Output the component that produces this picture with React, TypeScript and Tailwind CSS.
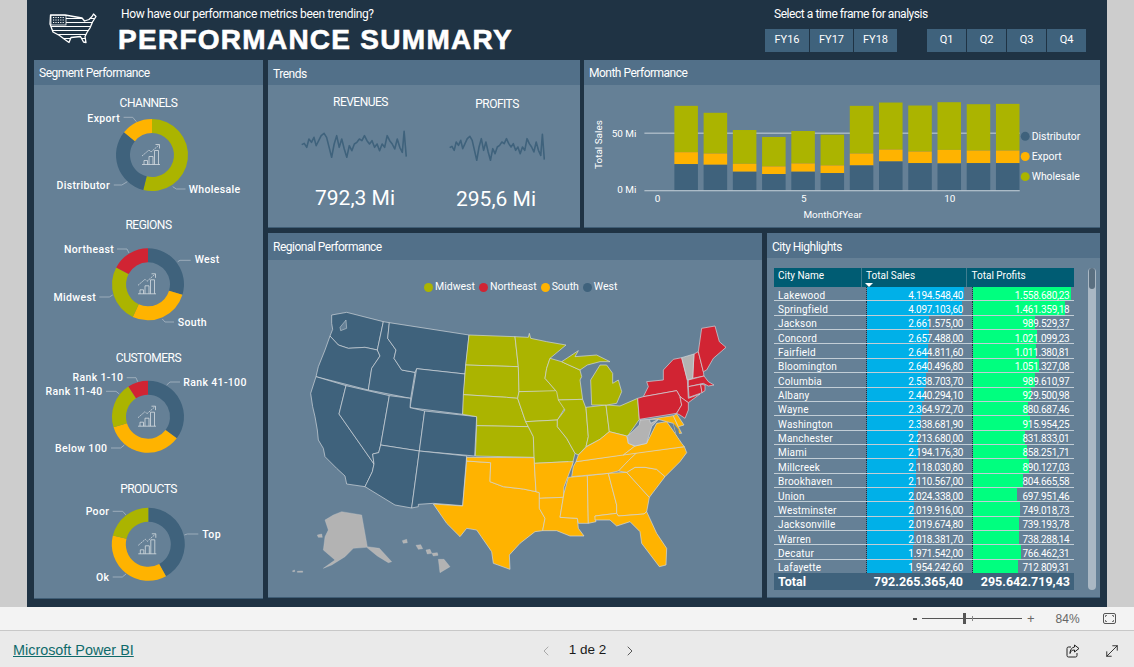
import React from 'react';
import { ChevronLeft, ChevronRight, MoveDiagonal } from 'lucide-react';

const BLUE = '#3f627c';
const GREEN = '#abb400';
const ORANGE = '#ffb300';
const RED = '#d12433';
const GRAY = '#b3b3b3';

type Slice = { color: string; from: number; to: number };
type Label = { text: string; x: number; y: number; anchor?: 'start' | 'end'; line: string };

const arcPath = (cx: number, cy: number, r: number, ir: number, from: number, to: number) => {
  const pt = (rad: number, deg: number) => {
    const a = ((deg - 90) * Math.PI) / 180;
    return `${(cx + rad * Math.cos(a)).toFixed(2)} ${(cy + rad * Math.sin(a)).toFixed(2)}`;
  };
  const large = to - from > 180 ? 1 : 0;
  return `M${pt(r, from)} A${r} ${r} 0 ${large} 1 ${pt(r, to)} L${pt(ir, to)} A${ir} ${ir} 0 ${large} 0 ${pt(ir, from)} Z`;
};

const ChartGlyph: React.FC<{ cx: number; cy: number }> = ({ cx, cy }) => (
  <g transform={`translate(${cx} ${cy})`} fill="none" stroke="#d5dce1" strokeWidth="0.8">
    <path d="M-9 9.5H9" />
    <path d="M-7 9.5V5.5H-3.5V9.5M-2 9.5V1.5H2V9.5M3.5 9.5V-4.5H7.5V9.5" />
    <path d="M-9 1L-2 -5L0 -3L8 -10" strokeDasharray="2 0.8" />
    <path d="M4.5 -10.5H8.5V-6.5" />
  </g>
);

const Donut: React.FC<{
  title: string;
  cx: number;
  cy: number;
  r: number;
  ir: number;
  top: number;
  height: number;
  slices: Slice[];
  labels: Label[];
}> = ({ title, cx, cy, r, ir, top, height, slices, labels }) => (
  <div className="flex flex-col">
    <div className="h-[18px] text-center text-[12px] leading-[18px] tracking-[-0.5px] text-white">{title}</div>
    <svg width="229" height={height} viewBox={`34 ${top} 229 ${height}`} className="block">
      {slices.map((s) => (
        <path key={s.color} d={arcPath(cx, cy, r, ir, s.from, s.to)} fill={s.color} />
      ))}
      <ChartGlyph cx={cx - 1} cy={cy} />
      {labels.map((l) => (
        <g key={l.text}>
          <polyline points={l.line} fill="none" stroke="#a9b8c4" strokeWidth="0.8" />
          <text x={l.x} y={l.y} textAnchor={l.anchor ?? 'start'} className="fill-white text-[10.5px] font-medium tracking-[0.35px]">
            {l.text}
          </text>
        </g>
      ))}
    </svg>
  </div>
);

const Panel: React.FC<{ title: string; className: string; children: React.ReactNode; headerClass?: string }> = ({
  title,
  className,
  children,
  headerClass = 'h-[25px] pt-[1px]',
}) => (
  <section className={`flex flex-col bg-[#658096] border-b border-[#3f5d75] ${className}`}>
    <div className={`flex items-center bg-[#527089] pl-[5px] text-[12px] tracking-[-0.5px] text-white shrink-0 ${headerClass}`}>{title}</div>
    {children}
  </section>
);

// trend line, same shape for revenues and profits
const spark =
  '828,432 835,428 842,440 848,415 855,425 862,410 868,435 875,420 882,405 890,398 897,410 904,440 911,470 918,430 925,405 932,440 939,415 946,445 953,470 960,435 967,450 974,430 981,425 988,415 995,420 1002,405 1009,420 1016,430 1023,420 1030,440 1037,430 1044,450 1051,430 1058,440 1065,405 1072,420 1079,430 1086,445 1093,415 1100,440 1107,455 1112,392 1118,468';

const TrendCol: React.FC<{ title: string; value: string; className: string; titleTop: string; sparkW: string; sparkTop: string; sparkLeft: string; valueLeft: string }> = ({
  title,
  value,
  className,
  titleTop,
  sparkW,
  sparkTop,
  sparkLeft,
  valueLeft,
}) => (
  <div className={`flex flex-col items-center ${className}`}>
    <div className={`text-[12px] leading-[16px] tracking-[-0.5px] text-white ${titleTop}`}>{title}</div>
    <svg viewBox="826 388 294 84" preserveAspectRatio="none" className={`block h-[28px] ${sparkW} ${sparkTop} ${sparkLeft}`}>
      <polyline points={spark} fill="none" stroke={BLUE} strokeWidth="1.6" strokeLinejoin="round" vectorEffect="non-scaling-stroke" />
    </svg>
    <div className={`text-[21px] leading-[28px] text-white ${valueLeft}`}>{value}</div>
  </div>
);

const bars = [
  [318, 458, 494],
  [339, 462, 496],
  [391, 493, 517],
  [412, 501, 524],
  [394, 492, 517],
  [405, 498, 521],
  [318, 462, 498],
  [308, 450, 486],
  [317, 456, 491],
  [307, 451, 492],
  [313, 453, 491],
  [312, 453, 491],
];

const MonthChart: React.FC = () => (
  <svg width="516" height="143" viewBox="584 85 516 143" className="block">
    <line x1="643" x2="1021" y1="133.5" y2="133.5" stroke="#c8d2da" strokeWidth="1" />
    {bars.map((b, i) => {
      const x = 673.2 + i * 29.44;
      const [a, c, d] = b.map((v) => v / 3);
      return (
        <g key={i}>
          <rect x={x} y={a} width="23.7" height={c - a} fill={GREEN} />
          <rect x={x} y={c} width="23.7" height={d - c} fill={ORANGE} />
          <rect x={x} y={d} width="23.7" height={191 - d} fill={BLUE} />
        </g>
      );
    })}
    <line x1="643" x2="1021" y1="191.5" y2="191.5" stroke="#c8d2da" strokeWidth="1" />
    <g className="fill-white text-[10px]">
      <text x="635" y="137" textAnchor="end">50 Mi</text>
      <text x="635" y="194" textAnchor="end">0 Mi</text>
      <text x="656.3" y="203" textAnchor="middle">0</text>
      <text x="803.5" y="203" textAnchor="middle">5</text>
      <text x="950.6" y="203" textAnchor="middle">10</text>
      <text x="832.6" y="219" textAnchor="middle">MonthOfYear</text>
      <text transform="translate(600 145) rotate(-90)" textAnchor="middle">Total Sales</text>
      <text x="1033" y="140.5" className="text-[10.5px]">Distributor</text>
      <text x="1033" y="160.5" className="text-[10.5px]">Export</text>
      <text x="1033" y="181" className="text-[10.5px]">Wholesale</text>
    </g>
    <circle cx="1026.5" cy="136.7" r="4.5" fill={BLUE} />
    <circle cx="1026.5" cy="157" r="4.5" fill={ORANGE} />
    <circle cx="1026.5" cy="177.3" r="4.5" fill={GREEN} />
  </svg>
);

const states: { color: string; pts: string }[] = [
  // west
  { color: BLUE, pts: '125,135 170,127 280,155 262,240 225,232 175,235 145,225 120,198 128,178 125,160' },
  { color: BLUE, pts: '120,198 145,225 175,235 225,232 262,240 270,258 245,295 235,360 78,320 85,290 105,240' },
  { color: BLUE, pts: '78,320 168,347 147,432 252,582 247,605 230,640 225,650 170,642 165,618 140,595 105,560 100,535 85,510 82,480 75,440 68,410 62,370' },
  { color: BLUE, pts: '168,347 298,377 272,525 266,548 248,552 252,582 147,432' },
  { color: BLUE, pts: '280,155 298,158 293,205 318,240 312,265 335,300 375,307 362,385 235,360 245,295 270,258 262,240' },
  { color: BLUE, pts: '298,158 537,195 525,312 380,296 375,307 335,300 312,265 318,240 293,205' },
  { color: BLUE, pts: '380,296 525,312 518,433 360,413' },
  { color: BLUE, pts: '298,377 362,385 360,413 404,423 388,543 272,525' },
  { color: BLUE, pts: '404,423 560,440 554,558 388,543' },
  { color: BLUE, pts: '272,525 388,543 365,714 315,705 225,650 230,640 247,605 252,582 248,552 266,548' },
  { color: BLUE, pts: '388,543 530,558 518,707 430,700 385,703 385,710 365,714' },
  // midwest
  { color: GREEN, pts: '537,195 675,200 685,290 527,285' },
  { color: GREEN, pts: '527,285 685,290 687,365 683,385 650,382 520,374' },
  { color: GREEN, pts: '520,374 650,382 683,385 695,420 707,455 715,470 560,467 560,440 518,433' },
  { color: GREEN, pts: '560,467 715,470 730,500 733,562 556,558' },
  { color: GREEN, pts: '675,200 715,202 718,190 722,205 770,215 828,225 780,265 770,295 765,325 800,365 687,365 685,290' },
  { color: GREEN, pts: '687,365 800,362 830,405 802,450 707,455 695,420 683,385' },
  { color: GREEN, pts: '707,455 802,450 802,470 830,505 855,550 845,590 835,575 733,580 730,500 715,470' },
  { color: GREEN, pts: '780,265 815,275 870,300 875,320 870,330 878,388 805,390 800,365 765,325 770,295' },
  { color: GREEN, pts: '805,390 878,388 888,415 895,500 888,530 865,555 855,550 830,505 802,470 802,450 825,420' },
  { color: GREEN, pts: '888,412 948,405 958,485 930,508 888,530 895,500' },
  { color: GREEN, pts: '948,405 990,408 1043,385 1048,448 1015,495 1010,498 958,485' },
  { color: GREEN, pts: '905,405 902,330 930,285 950,285 968,310 968,340 985,330 995,365 980,400 950,405' },
  { color: GREEN, pts: '815,275 865,242 855,260 920,255 960,275 930,275 892,285 870,300 825,280' },
  // northeast
  { color: RED, pts: '1060,380 1075,350 1070,335 1120,330 1120,300 1150,268 1175,263 1192,330 1195,385 1230,372 1195,398 1170,380 1160,362' },
  { color: RED, pts: '1043,385 1060,380 1160,362 1170,380 1175,405 1160,430 1048,448' },
  { color: RED, pts: '1170,380 1195,398 1195,420 1185,445 1170,435 1160,430 1175,405' },
  { color: RED, pts: '1212,252 1225,245 1240,305 1242,318 1208,325' },
  { color: RED, pts: '1225,245 1235,175 1275,168 1288,215 1308,232 1270,265 1250,300 1240,305' },
  { color: RED, pts: '1195,330 1242,318 1255,335 1272,345 1255,348 1240,340 1195,350' },
  { color: RED, pts: '1195,350 1232,343 1236,368 1197,382' },
  { color: RED, pts: '1232,343 1245,345 1245,362 1236,368' },
  // south
  { color: ORANGE, pts: '530,573 602,578 600,635 640,650 700,657 738,665 748,668 748,715 765,745 758,782 735,785 690,820 658,855 660,898 610,880 605,845 560,780 530,775 510,800 470,760 430,702 518,708' },
  { color: ORANGE, pts: '530,562 732,563 738,665 700,657 640,650 600,635 602,578 530,573' },
  { color: ORANGE, pts: '733,580 835,575 850,575 845,590 822,650 820,682 748,685 748,668 738,665' },
  { color: ORANGE, pts: '748,685 820,682 810,742 862,745 865,775 882,798 840,798 800,782 758,782 765,745 748,715' },
  { color: ORANGE, pts: '835,622 892,617 895,760 865,760 862,745 810,742 822,670' },
  { color: ORANGE, pts: '892,617 955,610 980,705 980,730 915,738 918,755 895,760' },
  { color: ORANGE, pts: '955,610 1010,607 1078,682 1070,725 1062,732 985,738 980,730 980,705' },
  { color: ORANGE, pts: '915,738 980,730 985,738 1062,732 1070,725 1100,790 1130,835 1128,885 1108,890 1055,820 1050,785 1020,755 980,768 960,750 915,750' },
  { color: ORANGE, pts: '1010,607 1035,592 1065,592 1100,598 1125,620 1078,682' },
  { color: ORANGE, pts: '985,603 1015,572 1040,548 1183,530 1190,548 1170,575 1160,585 1125,620 1100,598 1065,592 1035,592 1010,607' },
  { color: ORANGE, pts: '858,575 1040,548 1015,572 985,603 955,610 845,620 850,590' },
  { color: ORANGE, pts: '858,575 865,555 890,530 930,508 958,485 1010,498 1015,520 1035,528 1000,555' },
  { color: ORANGE, pts: '1000,555 1035,528 1070,520 1100,460 1130,455 1155,490 1175,520 1183,530' },
  { color: ORANGE, pts: '1078,448 1150,437 1165,470 1175,490 1158,490 1150,460 1130,455 1105,448' },
  { color: ORANGE, pts: '1150,437 1160,432 1182,465 1165,470' },
  // no data
  { color: GRAY, pts: '1175,263 1212,252 1208,325 1192,330' },
  { color: GRAY, pts: '1012,500 1048,465 1050,450 1078,448 1082,460 1105,448 1085,470 1070,520 1035,528 1015,520' },
];

const specks = [
  '130,735 155,725 215,735 232,830 268,835 305,875 295,878 262,858 230,832 190,835 165,860 125,885 100,895 135,870 100,840 105,800 115,780 105,750',
  '445,868 462,868 480,890 450,908',
  '337,812 350,808 352,818 340,820',
  '378,826 392,824 398,836 385,838',
  '408,840 420,838 425,850 412,852',
  '426,850 442,848 444,856 430,858',
  '82,795 95,792 97,802 85,802',
  '8,902 14,900 14,905 8,905',
  '22,904 38,903 38,907 22,907',
];

const UsMap: React.FC = () => (
  <svg width="450" height="296" viewBox="0 72 1350 888" className="block ml-[22px]">
    {states.map((s, i) => (
      <polygon key={i} points={s.pts} fill={s.color} stroke="#d4dade" strokeWidth="2" strokeLinejoin="round" />
    ))}
    {specks.map((p) => (
      <polygon key={p} points={p} fill={GRAY} stroke="#c4c9cc" strokeWidth="1" />
    ))}
    <polygon points="1150,460 1158,490 1170,510 1165,478" fill="#658096" />
    <polygon points="150,172 168,150 170,175 152,182" fill="#658096" stroke="#d4dade" strokeWidth="1.5" />
  </svg>
);

const cities: [string, number, string, number, string][] = [
  ['Lakewood', 4194548, '4.194.548,40', 1558680, '1.558.680,23'],
  ['Springfield', 4097103, '4.097.103,60', 1461359, '1.461.359,18'],
  ['Jackson', 2661575, '2.661.575,00', 989529, '989.529,37'],
  ['Concord', 2657488, '2.657.488,00', 1021099, '1.021.099,23'],
  ['Fairfield', 2644811, '2.644.811,60', 1011380, '1.011.380,81'],
  ['Bloomington', 2640496, '2.640.496,80', 1051327, '1.051.327,08'],
  ['Columbia', 2538703, '2.538.703,70', 989610, '989.610,97'],
  ['Albany', 2440294, '2.440.294,10', 929500, '929.500,98'],
  ['Wayne', 2364972, '2.364.972,70', 880687, '880.687,46'],
  ['Washington', 2338681, '2.338.681,90', 915954, '915.954,25'],
  ['Manchester', 2213680, '2.213.680,00', 831833, '831.833,01'],
  ['Miami', 2194176, '2.194.176,30', 858251, '858.251,71'],
  ['Millcreek', 2118030, '2.118.030,80', 890127, '890.127,03'],
  ['Brookhaven', 2110567, '2.110.567,00', 804665, '804.665,58'],
  ['Union', 2024338, '2.024.338,00', 697951, '697.951,46'],
  ['Westminster', 2019916, '2.019.916,00', 749018, '749.018,73'],
  ['Jacksonville', 2019674, '2.019.674,80', 739193, '739.193,78'],
  ['Warren', 2018381, '2.018.381,70', 738288, '738.288,14'],
  ['Decatur', 1971542, '1.971.542,00', 766462, '766.462,31'],
  ['Lafayette', 1954242, '1.954.242,60', 712809, '712.809,31'],
];

const CityTable: React.FC = () => (
  <div className="flex pl-[7px] pt-[10px]">
    <div className="flex w-[300px] flex-col">
      <div className="relative flex h-[19px] bg-[#005c73] text-[10px] leading-[15px] text-white">
        <div className="w-[87.5px] border-r border-[#3f7d90] pl-[4px]">City Name</div>
        <div className="w-[105.5px] border-r border-[#3f7d90] pl-[4.5px]">Total Sales</div>
        <div className="pl-[4.5px]">Total Profits</div>
        <div className="absolute left-[91px] top-[15px] h-0 w-0 border-x-[4px] border-t-[4px] border-x-transparent border-t-white" />
      </div>
      <div className="h-[286px] overflow-hidden">
        {cities.map(([name, sales, salesText, profit, profitText]) => (
          <div key={name} className="flex h-[14.37px] border-b border-[#c3ced6] text-[10px] leading-[14px] text-white">
            <div className="w-[92.3px] pl-[4px] pt-[1.5px] tracking-[0.2px]">{name}</div>
            <div className="relative w-[105.4px] border-l border-dotted border-[#1f3344]">
              <div className="absolute inset-y-0 left-0 bg-[#00b0e8]" style={{ width: (sales / 4194548) * 96.7 }} />
              <div className="absolute right-[8.5px] top-[1.5px] tracking-[-0.25px]">{salesText}</div>
            </div>
            <div className="relative flex-1 border-l border-dotted border-[#1f3344]">
              <div className="absolute inset-y-0 left-0 bg-[#00ff7f]" style={{ width: (profit / 1558680) * 98.3 }} />
              <div className="absolute right-[4.5px] top-[1.5px] tracking-[-0.25px]">{profitText}</div>
            </div>
          </div>
        ))}
      </div>
      <div className="flex h-[17px] items-center bg-[#3f627c] pt-[2px] text-[12.5px] font-bold text-white">
        <div className="w-[88px] pl-[4px]">Total</div>
        <div className="w-[101px] text-right">792.265.365,40</div>
        <div className="flex-1 pr-[4px] text-right">295.642.719,43</div>
      </div>
    </div>
    <div className="ml-[14px] h-[322px] w-[8px] rounded-full bg-[#aab8c4]">
      <div className="mx-auto h-[21px] w-[6px] rounded-full bg-[#5a6f80]" />
    </div>
  </div>
);

const FlagMap: React.FC = () => (
  <svg width="48" height="31" viewBox="0 0 48 31" className="block">
    <defs>
      <clipPath id="us-outline">
        <path d="M1.5 2H16L33 5L35.5 8L40 6.5L43 3.5L44.5 1L47 3.5L43.5 9L41 15L38 19.5L36 23.5L37 29.5L34.5 29L31.5 23.5L22 24.5L20 29.5L16.5 27L10.5 22.5L4 19L1 11Z" />
      </clipPath>
    </defs>
    <g clipPath="url(#us-outline)" stroke="#ffffff" strokeWidth="1.2">
      <path d="M17 5.5H46M17 9.5H46M1 13.5H46M1 17.5H46M1 21.5H46M1 25.5H46" fill="none" />
      <rect x="2" y="2" width="15" height="10" fill="#1f3344" strokeWidth="0.8" />
      <path d="M4 4.5H15M4 7H15M4 9.5H15" strokeDasharray="1.2 1.2" strokeWidth="1.2" fill="none" />
    </g>
    <path d="M1.5 2H16L33 5L35.5 8L40 6.5L43 3.5L44.5 1L47 3.5L43.5 9L41 15L38 19.5L36 23.5L37 29.5L34.5 29L31.5 23.5L22 24.5L20 29.5L16.5 27L10.5 22.5L4 19L1 11Z" fill="none" stroke="#ffffff" strokeWidth="1.3" strokeLinejoin="round" />
  </svg>
);

const SlicerButton: React.FC<{ label: string; width: string }> = ({ label, width }) => (
  <div className={`flex h-[23px] items-center justify-center bg-[#3f627c] text-[11px] text-white ${width}`}>{label}</div>
);

export default function App() {
  return (
    <div className="flex h-[667px] w-[1134px] flex-col overflow-hidden bg-[#eaeaea] font-['Roboto',sans-serif]">
      <div className="flex h-[607px] shrink-0 justify-center bg-[#cdcdcd]">
        <div className="flex w-[1080px] flex-col bg-[#1f3344] px-[7px]">
          {/* header */}
          <header className="flex h-[60px] shrink-0">
            <div className="ml-[15px] mt-[13px]">
              <FlagMap />
            </div>
            <div className="ml-[21px] flex flex-col">
              <div className="ml-[3px] mt-[6px] h-[16px] text-[12px] leading-[16px] tracking-[-0.36px] text-white">
                How have our performance metrics been trending?
              </div>
              <div className="mt-[2px] text-[28px] font-bold leading-[32px] tracking-[1.27px] text-white font-['Liberation_Sans',sans-serif] [-webkit-text-stroke:0.6px_white]">
                PERFORMANCE SUMMARY
              </div>
            </div>
            <div className="ml-auto mr-[14px] flex flex-col">
              <div className="ml-[9px] mt-[6px] text-[12px] leading-[16px] tracking-[-0.45px] text-white">Select a time frame for analysis</div>
              <div className="mt-[7px] flex">
                <div className="flex gap-[1px]">
                  <SlicerButton label="FY16" width="w-[44px]" />
                  <SlicerButton label="FY17" width="w-[43px]" />
                  <SlicerButton label="FY18" width="w-[43px]" />
                </div>
                <div className="ml-[30px] flex gap-[1px]">
                  <SlicerButton label="Q1" width="w-[39px]" />
                  <SlicerButton label="Q2" width="w-[39px]" />
                  <SlicerButton label="Q3" width="w-[39px]" />
                  <SlicerButton label="Q4" width="w-[39px]" />
                </div>
              </div>
            </div>
          </header>

          <div className="flex gap-[5px]">
            <Panel title="Segment Performance" className="h-[539px] w-[229px]">
              <div className="pt-[9px]">
                <Donut
                  title="CHANNELS"
                  cx={152}
                  cy={155}
                  r={36}
                  ir={22}
                  top={112}
                  height={104}
                  slices={[
                    { color: GREEN, from: 0, to: 194 },
                    { color: BLUE, from: 194, to: 309 },
                    { color: ORANGE, from: 309, to: 360 },
                  ]}
                  labels={[
                    { text: 'Export', x: 120, y: 122, anchor: 'end', line: '123.6,117.3 132.7,117.3 136.4,121.7' },
                    { text: 'Distributor', x: 110, y: 188.7, anchor: 'end', line: '113.8,185 121.8,185 127.3,181.7' },
                    { text: 'Wholesale', x: 188.7, y: 192.7, line: '172.7,186.7 176.4,189 185.5,189' },
                  ]}
                />
                <Donut
                  title="REGIONS"
                  cx={148}
                  cy={284.3}
                  r={36}
                  ir={22}
                  top={234}
                  height={115}
                  slices={[
                    { color: BLUE, from: 0, to: 107 },
                    { color: ORANGE, from: 107, to: 205 },
                    { color: GREEN, from: 205, to: 298 },
                    { color: RED, from: 298, to: 360 },
                  ]}
                  labels={[
                    { text: 'Northeast', x: 114, y: 252.7, anchor: 'end', line: '117,249 127,249 129,253' },
                    { text: 'West', x: 194.7, y: 263.3, line: '177.7,261.7 180,260.3 190.7,260.3' },
                    { text: 'Midwest', x: 96, y: 300.7, anchor: 'end', line: '99.3,297 109.3,297 112.7,295' },
                    { text: 'South', x: 177.7, y: 325.7, line: '162.3,319 165,322 174,322' },
                  ]}
                />
                <Donut
                  title="CUSTOMERS"
                  cx={148}
                  cy={416.7}
                  r={36}
                  ir={22}
                  top={367}
                  height={113}
                  slices={[
                    { color: BLUE, from: 0, to: 127 },
                    { color: ORANGE, from: 127, to: 253 },
                    { color: GREEN, from: 253, to: 327 },
                    { color: RED, from: 327, to: 360 },
                  ]}
                  labels={[
                    { text: 'Rank 1-10', x: 123.3, y: 380.7, anchor: 'end', line: '126.7,377.7 136,377.7 137.7,381.7' },
                    { text: 'Rank 11-40', x: 102.7, y: 394.7, anchor: 'end', line: '106,391.3 116,391.3 119.3,394' },
                    { text: 'Rank 41-100', x: 183.3, y: 385.7, line: '166.7,385 170,382 180,382' },
                    { text: 'Below 100', x: 107.3, y: 451.7, anchor: 'end', line: '111,448 120.7,448 124.3,445' },
                  ]}
                />
                <Donut
                  title="PRODUCTS"
                  cx={148.3}
                  cy={544.3}
                  r={36.5}
                  ir={22.5}
                  top={498}
                  height={100}
                  slices={[
                    { color: BLUE, from: 0, to: 151 },
                    { color: ORANGE, from: 151, to: 284 },
                    { color: GREEN, from: 284, to: 360 },
                  ]}
                  labels={[
                    { text: 'Poor', x: 109.3, y: 515, anchor: 'end', line: '112.7,511.3 122.7,511.3 126,515' },
                    { text: 'Top', x: 202.3, y: 538.3, line: '184.3,535 187.3,534 198.3,534' },
                    { text: 'Ok', x: 109.3, y: 580.7, anchor: 'end', line: '112.7,577 122.3,577 126,574' },
                  ]}
                />
              </div>
            </Panel>

            <div className="flex w-[832px] flex-col gap-[5px]">
              <div className="flex gap-[4px]">
                <Panel title="Trends" className="h-[168px] w-[312px]" headerClass="h-[25px] pt-[2px]">
                  <div className="flex pl-[30px]">
                    <TrendCol title="REVENUES" value="792,3 Mi" className="w-[125px]" titleTop="mt-[9px]" sparkW="w-[106px]" sparkTop="mt-[20px]" sparkLeft="-ml-[14px]" valueLeft="mt-[26px] -ml-[11px]" />
                    <TrendCol title="PROFITS" value="295,6 Mi" className="w-[148px]" titleTop="mt-[11px]" sparkW="w-[96px]" sparkTop="mt-[21px]" sparkLeft="ml-0" valueLeft="mt-[24px] -ml-[2px]" />
                  </div>
                </Panel>
                <Panel title="Month Performance" className="h-[168px] w-[516px]">
                  <MonthChart />
                </Panel>
              </div>
              <div className="flex gap-[5px]">
                <Panel title="Regional Performance" className="h-[365px] w-[494px]" headerClass="h-[27px]">
                  <div className="mt-[20px] ml-[156px] flex h-[14px] items-center text-[10.5px] text-white">
                    <span className="h-[9px] w-[9px] rounded-full bg-[#abb400]" />
                    <span className="ml-[2px]">Midwest</span>
                    <span className="ml-[4px] h-[9px] w-[9px] rounded-full bg-[#d12433]" />
                    <span className="ml-[2px]">Northeast</span>
                    <span className="ml-[4px] h-[9px] w-[9px] rounded-full bg-[#ffb300]" />
                    <span className="ml-[2px]">South</span>
                    <span className="ml-[4px] h-[9px] w-[9px] rounded-full bg-[#3f627c]" />
                    <span className="ml-[2px]">West</span>
                  </div>
                  <UsMap />
                </Panel>
                <Panel title="City Highlights" className="h-[365px] w-[333px]" headerClass="h-[25px] pt-[2px]">
                  <CityTable />
                </Panel>
              </div>
            </div>
          </div>
        </div>
      </div>

      {/* report viewer footer */}
      <div className="flex h-[23px] shrink-0 items-center bg-[#f3f3f3] font-['Liberation_Sans',sans-serif] text-[#666666]">
        <span className="ml-[913px] h-[2px] w-[4px] bg-[#555555]" />
        <div className="relative ml-[5px] h-[1px] w-[100px] bg-[#555555]">
          <span className="absolute left-[41px] top-[-5px] h-[11px] w-[3px] bg-[#555555]" />
          <span className="absolute left-[50px] top-[-2px] h-[5px] w-[1px] bg-[#888888]" />
        </div>
        <span className="ml-[5px] text-[13px] leading-none">+</span>
        <span className="ml-[21px] text-[12px]">84%</span>
        <svg width="15" height="15" viewBox="0 0 15 15" className="ml-[22px]" fill="none" stroke="#555555">
          <rect x="1.5" y="2.5" width="12" height="10" rx="1.5" />
          <path d="M3.5 6V4.5H5M10 4.5H11.5V6M11.5 9V10.5H10M5 10.5H3.5V9" strokeWidth="0.8" />
        </svg>
      </div>
      <div className="flex h-[37px] shrink-0 items-center border-t border-[#c8c8c8] bg-[#eaeaea] pt-[3px] font-['Liberation_Sans',sans-serif]">
        <a className="ml-[13px] text-[14.4px] text-[#0f6a6b] underline">Microsoft Power BI</a>
        <ChevronLeft size={16} strokeWidth={1} className="ml-[404px] text-[#8a8a8a]" />
        <span className="ml-[15px] text-[13.5px] text-[#1a1a1a]">1 de 2</span>
        <ChevronRight size={16} strokeWidth={1.2} className="ml-[16px] text-[#333333]" />
        <svg width="16" height="16" viewBox="0 0 16 16" className="ml-[427px]" fill="none" stroke="#222222" strokeWidth="1">
          <path d="M6 4H3.5A1.5 1.5 0 0 0 2 5.5V12.5A1.5 1.5 0 0 0 3.5 14H10.5A1.5 1.5 0 0 0 12 12.5V10" />
          <path d="M9.5 2L14 5.5L9.5 9V7C7 7 5.5 8 5 10.5C5 7 6.5 4.5 9.5 4Z" />
        </svg>
        <MoveDiagonal size={18} strokeWidth={1.2} className="ml-[22px] text-[#222222]" />
      </div>
    </div>
  );
}
